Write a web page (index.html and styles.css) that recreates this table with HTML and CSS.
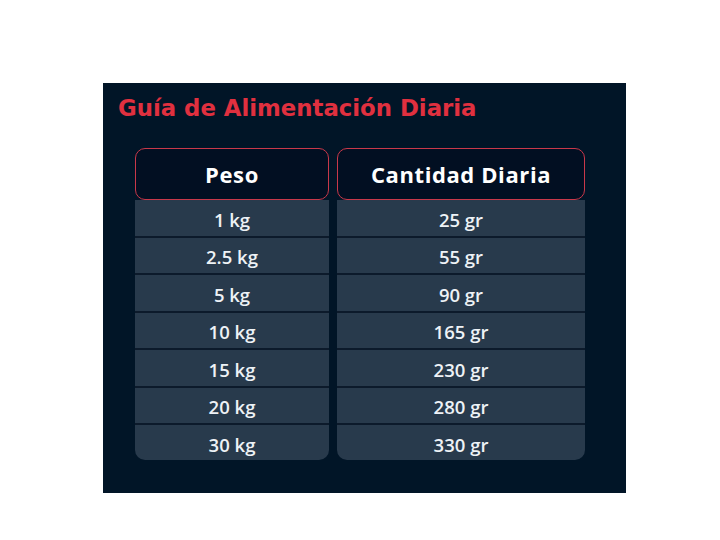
FILE: index.html
```
<!DOCTYPE html>
<html lang="es">
<head>
<meta charset="utf-8">
<title>Guía de Alimentación Diaria</title>
<link rel="stylesheet" href="styles.css">
</head>
<body>
<div class="panel">
  <h1 class="title">Guía de Alimentación Diaria</h1>
  <div class="table">
    <div class="col col-peso">
      <div class="head">Peso</div>
      <div class="cell">1 kg</div>
      <div class="cell">2.5 kg</div>
      <div class="cell">5 kg</div>
      <div class="cell">10 kg</div>
      <div class="cell">15 kg</div>
      <div class="cell">20 kg</div>
      <div class="cell last">30 kg</div>
    </div>
    <div class="col col-cant">
      <div class="head">Cantidad Diaria</div>
      <div class="cell">25 gr</div>
      <div class="cell">55 gr</div>
      <div class="cell">90 gr</div>
      <div class="cell">165 gr</div>
      <div class="cell">230 gr</div>
      <div class="cell">280 gr</div>
      <div class="cell last">330 gr</div>
    </div>
  </div>
</div>
</body>
</html>
```
FILE: styles.css
```
html, body {
  margin: 0;
  padding: 0;
  background: #ffffff;
}
body {
  width: 720px;
  height: 540px;
  overflow: hidden;
}
.panel {
  margin: 83px 0 0 103px;
  width: 523px;
  height: 410px;
  box-sizing: border-box;
  background: #011527;
  padding: 9px 0 0 15px;
}
.title {
  margin: 0;
  font-family: "DejaVu Sans", sans-serif;
  font-weight: bold;
  font-size: 22.8px;
  line-height: 32px;
  color: #e0303f;
}
.table {
  display: flex;
  gap: 8px;
  margin: 24px 0 0 17px;
}
.col {
  display: flex;
  flex-direction: column;
}
.col-peso { width: 194px; }
.col-cant { width: 248px; }
.head {
  height: 52px;
  box-sizing: border-box;
  border: 1.5px solid #c8384a;
  border-radius: 10px;
  background: #020f22;
  color: #ffffff;
  font-family: "Open Sans", sans-serif;
  font-weight: 700;
  font-size: 22px;
  display: flex;
  align-items: center;
  justify-content: center;
  letter-spacing: 0.6px;
}
.cell {
  height: 37.5px;
  box-sizing: border-box;
  padding-top: 3px;
  background: #283a4c;
  border-bottom: 2px solid #0c1a2b;
  color: #eef2f6;
  font-family: "Open Sans", sans-serif;
  font-weight: 600;
  font-size: 18.5px;
  display: flex;
  align-items: center;
  justify-content: center;
}
.cell.last {
  height: 35px;
  border-bottom: none;
  border-radius: 0 0 10px 10px;
}
```
